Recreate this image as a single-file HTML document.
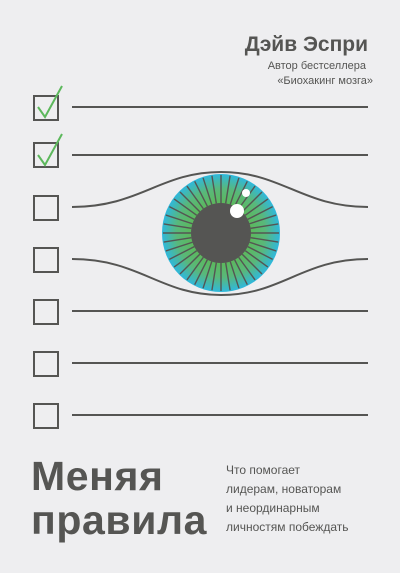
<!DOCTYPE html>
<html><head><meta charset="utf-8"><style>
body{margin:0;width:400px;height:573px;background:#eeeef0;overflow:hidden;font-family:"Liberation Sans",sans-serif;color:#555553}
.t{position:absolute;white-space:nowrap}
</style></head><body>
<svg width="400" height="573" style="position:absolute;left:0;top:0">
<defs>
<radialGradient id="ir" cx="50%" cy="50%" r="50%">
<stop offset="0.5" stop-color="#5cb85c"/><stop offset="0.75" stop-color="#59b87a"/><stop offset="1" stop-color="#2fb8dc"/>
</radialGradient>
</defs>
<g fill="none" stroke="#555553" stroke-width="2">
<rect x="34" y="96" width="24" height="24"/>
<rect x="34" y="143" width="24" height="24"/>
<rect x="34" y="196" width="24" height="24"/>
<rect x="34" y="248" width="24" height="24"/>
<rect x="34" y="300" width="24" height="24"/>
<rect x="34" y="352" width="24" height="24"/>
<rect x="34" y="404" width="24" height="24"/>
<line x1="72" y1="107" x2="368" y2="107"/>
<line x1="72" y1="155" x2="368" y2="155"/>
<line x1="72" y1="311" x2="368" y2="311"/>
<line x1="72" y1="363" x2="368" y2="363"/>
<line x1="72" y1="415" x2="368" y2="415"/>
<path d="M72 207 C140 207 160 172 221 172 C282 172 302 207 368 207"/>
<path d="M72 259 C140 259 160 295 221 295 C282 295 302 259 368 259"/>
</g>
<g fill="none" stroke="#5cb85c" stroke-width="2">
<path d="M38 107 L45 117 L62 86"/>
<path d="M38 155 L45 165 L62 134"/>
</g>
<circle cx="221" cy="233" r="59" fill="url(#ir)"/>
<g id="sp" stroke="#555553" stroke-width="1.4"></g>
<circle cx="221" cy="233" r="30" fill="#555553"/>
<circle cx="237" cy="211" r="7" fill="#fff"/>
<circle cx="246" cy="193" r="4" fill="#fff"/>
</svg>
<script>
var g=document.getElementById('sp'),s='';
for(var i=0;i<40;i++){var a=i*Math.PI*2/40,c=Math.cos(a),n=Math.sin(a);
s+='<line x1="'+(221+30*c)+'" y1="'+(233+30*n)+'" x2="'+(221+58*c)+'" y2="'+(233+58*n)+'"/>';}
g.innerHTML=s;
</script>
<div class="t" style="right:32px;top:33px;font-size:21px;font-weight:bold">Дэйв Эспри</div>
<div class="t" style="right:34px;top:60px;font-size:11px">Автор бестселлера</div>
<div class="t" style="right:27px;top:75px;font-size:11px">«Биохакинг мозга»</div>
<div class="t" style="left:31px;top:454px;font-size:41px;font-weight:bold;line-height:44px;letter-spacing:0.6px">Меняя<br>правила</div>
<div class="t" style="left:226px;top:461px;font-size:12px;line-height:19px">Что помогает<br>лидерам, новаторам<br>и неординарным<br>личностям побеждать</div>
</body></html>
